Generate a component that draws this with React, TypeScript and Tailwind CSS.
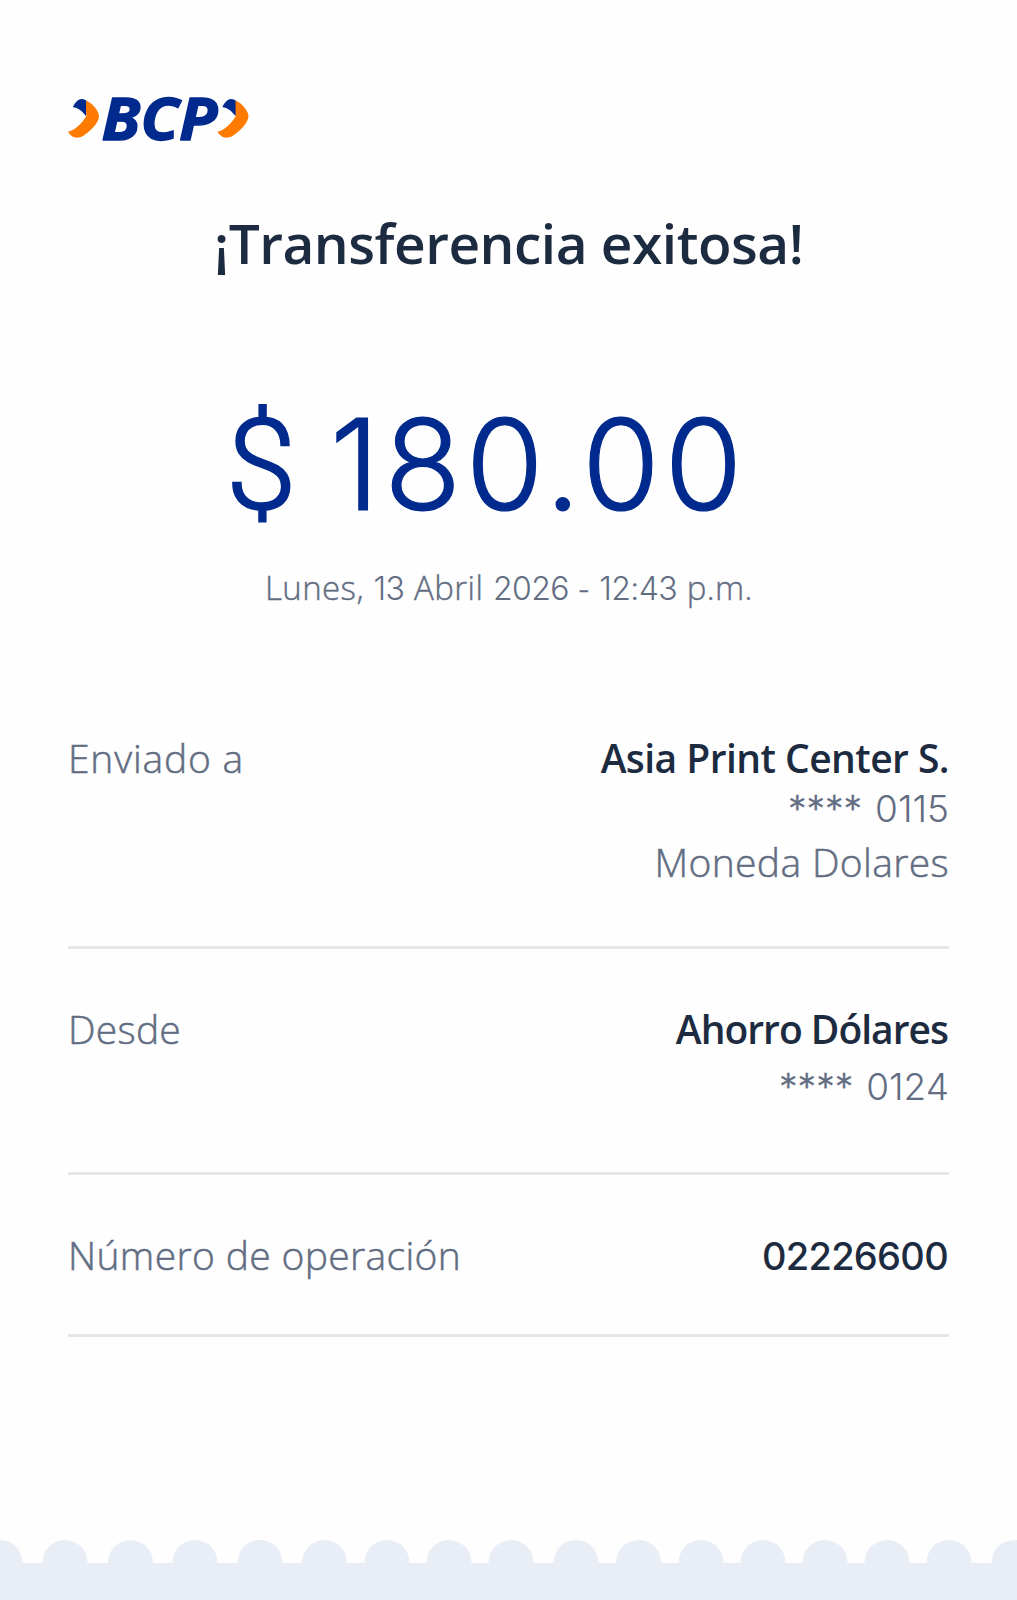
function Chevron({ x }: { x: number }) {
  return (
    <g transform={`translate(${x} 0)`}>
      <path
        d="M72.800 106.900C75.500 102 78.500 99 81.500 99C84 99 86 100 87 101.800L86.200 116.300C82.500 111.200 78 107.600 72.800 106.900Z"
        fill="#012a8e"
      />
      <path
        d="M86 100.500C92.500 103 99 111 99 116.500C99 122 90.500 131.500 83 136C77 139.200 71.500 138 67.900 131.800C74.500 130.500 81 124.500 86.200 116.300Z"
        fill="#ff7a00"
      />
    </g>
  );
}

function Logo() {
  return (
    <svg className="ml-[50px] h-[80px] w-[220px] overflow-visible" viewBox="50 80 220 80" role="img" aria-label="BCP">
      <Chevron x={0} />
      <text
        x="101.500"
        y="140.200"
        textLength="116"
        lengthAdjust="spacingAndGlyphs"
        fill="#012a8e"
        stroke="#012a8e"
        strokeWidth="1.300"
        strokeLinejoin="round"
        className="font-['Open_Sans',sans-serif] text-[59px] font-[700] italic"
      >
        BCP
      </text>
      <Chevron x={149.5} />
    </svg>
  );
}

const label = "text-[39px] leading-[50px] font-[300] text-[#626d82] [-webkit-text-stroke:0.5px_#626d82]";
const value = "text-[39px] leading-[50px] font-[600] text-[#1d2b41]";

function Rule() {
  return <div className="h-[3px] w-full bg-[#e5e6e8]" />;
}

function Account({ digits }: { digits: string }) {
  return (
    <div className="flex font-['Inter',sans-serif] text-[37px] leading-[50px] font-[300] text-[#626d82]">
      <span className="mr-[13px] [-webkit-text-stroke:0.4px_#626d82]">****</span>
      <span>{digits}</span>
    </div>
  );
}

function Num({ children }: { children: string }) {
  return (
    <span className="font-['Inter',sans-serif] text-[32px] font-[300] tracking-[-0.6px] [-webkit-text-stroke:0px]">
      {children}
    </span>
  );
}

const scallops = [0, 65, 130.5, 195, 260, 324.5, 387, 449, 511, 576, 638.5, 701, 763, 825, 887, 949, 1014];

export default function App() {
  return (
    <main className="flex h-[1600px] w-[1017px] flex-col overflow-hidden bg-[#fefefe] pt-[80px] font-['Open_Sans',sans-serif]">
      <Logo />
      <h1 className="mt-[48px] ml-[214px] text-[55px] leading-[70px] font-[600] tracking-[-0.5px] whitespace-nowrap text-[#1d2b41]">
        ¡Transferencia exitosa!
      </h1>
      <div className="mt-[117px] ml-[226px] flex h-[140px] font-['Roboto',sans-serif] text-[127px] leading-[141px] font-[300] text-[#012a8e]">
        <span className="w-[104px] [-webkit-text-stroke:2px_#012a8e]">$</span>
        <span className="font-['Inter',sans-serif] text-[126px] leading-[139px] font-[300] tracking-[4.6px] [-webkit-text-stroke:1.2px_#012a8e]">
          180.00
        </span>
      </div>
      <p className="mt-[31px] ml-[265px] h-[44px] text-[33px] leading-[44px] font-[300] tracking-[0.4px] whitespace-nowrap text-[#626d82] [word-spacing:0.7px] [-webkit-text-stroke:0.4px_#626d82]">
        Lunes, <Num>13</Num> Abril <Num>2026</Num> - <Num>12:43</Num> p.m.
      </p>

      <section className="mt-[123px] flex flex-col px-[68px]">
        <div className="flex h-[213px] items-start justify-between">
          <span className={`${label} tracking-[0.8px]`}>Enviado a</span>
          <div className="flex flex-col items-end">
            <span className={`${value} mb-px tracking-[-0.55px]`}>Asia Print Center S.</span>
            <Account digits="0115" />
            <span className={`${label} mt-[3px] tracking-[0.35px]`}>Moneda Dolares</span>
          </div>
        </div>
        <Rule />
        <div className="flex h-[223px] items-start justify-between pt-[55px]">
          <span className={`${label} tracking-[0.25px]`}>Desde</span>
          <div className="flex flex-col items-end gap-[8px]">
            <span className={`${value} pr-px tracking-[-1px]`}>Ahorro Dólares</span>
            <Account digits="0124" />
          </div>
        </div>
        <Rule />
        <div className="flex h-[159px] items-start justify-between pt-[55px]">
          <span className={`${label} tracking-[0.35px]`}>Número de operación</span>
          <span className="pt-px pr-px font-['Inter',sans-serif] text-[38px] leading-[50px] font-[540] tracking-[-0.7px] text-[#1d2b41]">
            02226600
          </span>
        </div>
        <Rule />
      </section>

      <svg className="mt-auto h-[23px] w-full shrink-0" viewBox="0 0 1017 23" fill="#e9edf5" aria-hidden="true">
        {scallops.map((cx) => (
          <circle key={cx} cx={cx} cy="22.500" r="22.500" />
        ))}
      </svg>
      <div className="h-[37px] w-full shrink-0 bg-[#e9edf5]" />
    </main>
  );
}
